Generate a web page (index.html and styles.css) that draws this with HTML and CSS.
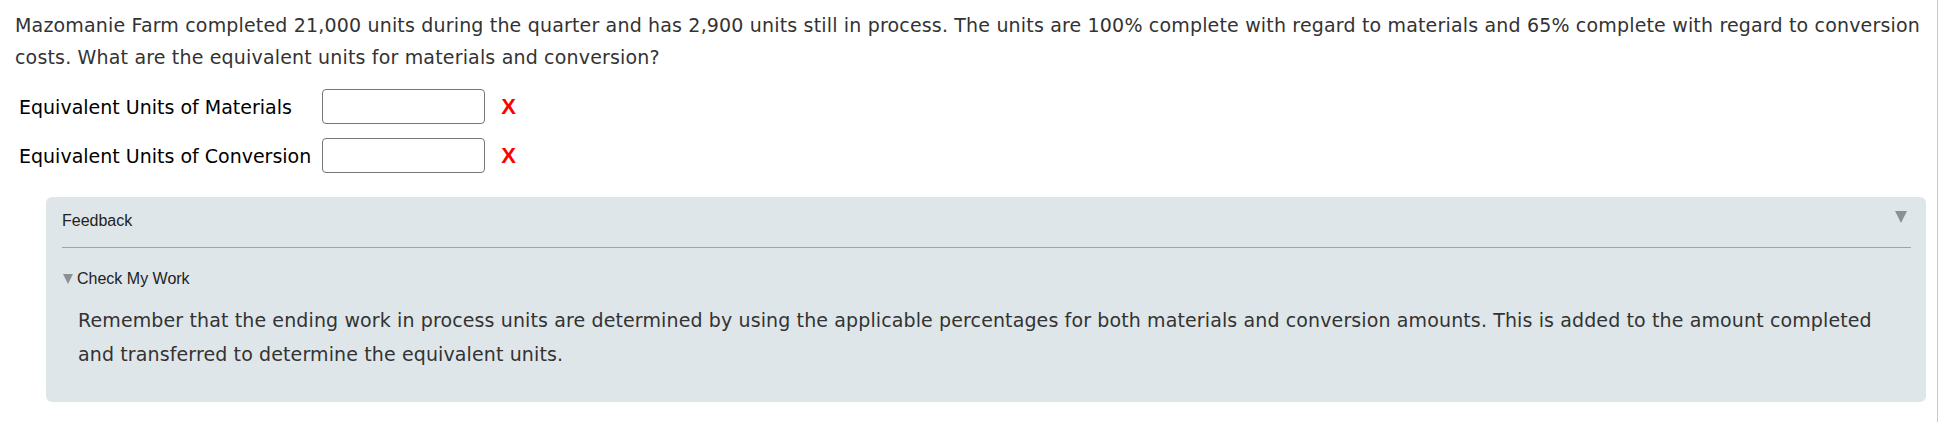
FILE: index.html
```html
<!DOCTYPE html>
<html>
<head>
<meta charset="utf-8">
<link rel="stylesheet" href="styles.css">
</head>
<body>
<div class="page">
  <p class="question">Mazomanie Farm completed 21,000 units during the quarter and has 2,900 units still in process. The units are 100% complete with regard to materials and 65% complete with regard to conversion costs. What are the equivalent units for materials and conversion?</p>
  <table class="answers">
    <tr>
      <td class="label">Equivalent Units of Materials</td>
      <td class="field"><input type="text" class="box"></td>
      <td class="mark">X</td>
    </tr>
    <tr>
      <td class="label">Equivalent Units of Conversion</td>
      <td class="field"><input type="text" class="box"></td>
      <td class="mark">X</td>
    </tr>
  </table>
  <div class="feedback">
    <div class="fb-head">
      <span class="fb-title">Feedback</span>
      <span class="tri tri-head"></span>
    </div>
    <div class="fb-body">
      <div class="cmw"><span class="tri tri-small"></span>Check My Work</div>
      <p class="hint">Remember that the ending work in process units are determined by using the applicable percentages for both materials and conversion amounts. This is added to the amount completed and transferred to determine the equivalent units.</p>
    </div>
  </div>
</div>
</body>
</html>
```
FILE: styles.css
```css
html, body {
  margin: 0;
  padding: 0;
  background: #fff;
}
.page {
  width: 1938px;
  height: 422px;
  border-right: 1px solid #c8c8c8;
  box-sizing: border-box;
  padding-top: 9px;
  font-family: "DejaVu Sans", Verdana, sans-serif;
}
.question {
  margin: 0;
  padding: 0 10px 0 15px;
  font-size: 19px;
  letter-spacing: 0.17px;
  line-height: 32px;
  color: #333;
}
.answers {
  border-collapse: collapse;
  margin: 9px 0 0 15px;
}
.answers td {
  padding: 0;
  height: 49px;
  vertical-align: middle;
}
.label {
  font-size: 19px;
  color: #000;
  padding-left: 4px !important;
  padding-right: 11px !important;
  white-space: nowrap;
}
.box {
  display: block;
  width: 163px;
  height: 35px;
  box-sizing: border-box;
  border: 1px solid #767676;
  border-radius: 4px;
  background: #fff;
  margin: 0;
}
.mark {
  font-family: "Liberation Sans", Arial, sans-serif;
  font-weight: bold;
  font-size: 22px;
  color: #f00;
  padding-left: 16px !important;
}
.feedback {
  margin: 17px 11px 0 46px;
  height: 205px;
  background: #dfe6e9;
  border-radius: 6px;
  padding: 0 15px 0 16px;
  box-sizing: border-box;
}
.fb-head {
  display: flex;
  justify-content: space-between;
  align-items: flex-start;
  height: 50px;
  border-bottom: 1px solid #9ea3a6;
  font-family: "Liberation Sans", Arial, sans-serif;
  font-size: 16px;
  color: #222;
}
.fb-title {
  padding-top: 15px;
}
.tri {
  display: inline-block;
  width: 0;
  height: 0;
  border-style: solid;
  border-color: #8a9195 transparent transparent transparent;
}
.tri-head {
  border-width: 12px 6px 0 6px;
  margin: 14px 4px 0 0;
}
.tri-small {
  border-width: 10px 5px 0 5px;
  margin: 0 4px 0 1px;
  vertical-align: 0px;
}
.cmw {
  font-family: "Liberation Sans", Arial, sans-serif;
  font-size: 16px;
  color: #222;
  margin-top: 22px;
}
.hint {
  margin: 15px 0 0 0;
  padding: 0 20px 0 16px;
  font-size: 19px;
  letter-spacing: 0.12px;
  line-height: 34px;
  color: #333;
}
```
